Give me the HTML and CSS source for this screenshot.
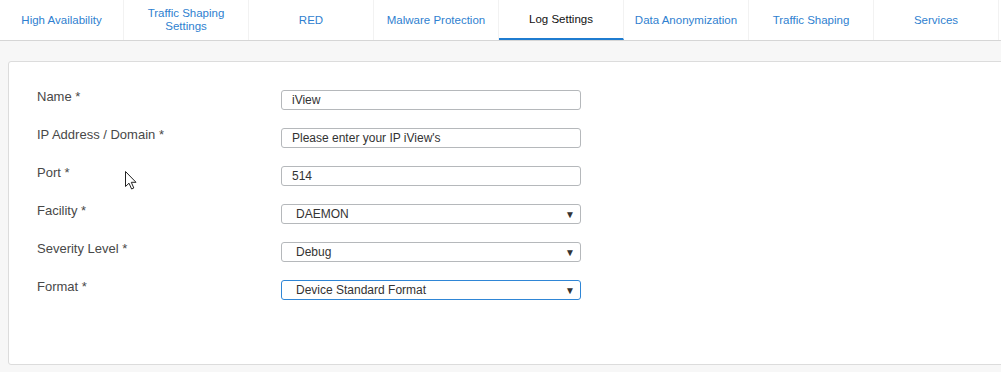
FILE: index.html
```html
<!DOCTYPE html>
<html lang="en">
<head>
  <meta charset="UTF-8">
  <title>Log Settings</title>
  <link rel="stylesheet" href="styles.css">
</head>
<body>
  <div class="tabs">
    <a class="tab first" href="#">High Availability</a>
    <a class="tab" href="#">Traffic Shaping<br>Settings</a>
    <a class="tab" href="#">RED</a>
    <a class="tab" href="#">Malware Protection</a>
    <a class="tab active" href="#">Log Settings</a>
    <a class="tab" href="#">Data Anonymization</a>
    <a class="tab" href="#">Traffic Shaping</a>
    <a class="tab" href="#">Services</a>
  </div>

  <div class="panel">
    <div class="form">
      <label class="label">Name *</label>
      <input class="field" type="text" value="iView">

      <label class="label">IP Address / Domain *</label>
      <input class="field" type="text" value="Please enter your IP iView's">

      <label class="label">Port *</label>
      <input class="field" type="text" value="514">

      <label class="label">Facility *</label>
      <div class="field select"><span>DAEMON</span><span class="arrow">&#9660;</span></div>

      <label class="label">Severity Level *</label>
      <div class="field select"><span>Debug</span><span class="arrow">&#9660;</span></div>

      <label class="label">Format *</label>
      <div class="field select focus"><span>Device Standard Format</span><span class="arrow">&#9660;</span></div>
    </div>
  </div>

  <!-- mouse pointer -->
  <svg class="cursor" width="12" height="19" viewBox="0 0 12 19">
    <path d="M0.5 0.5 L0.5 15.5 L4 12.2 L6.6 18 L8.8 17 L6.3 11.3 L11 11.3 Z" fill="#fff" stroke="#222" stroke-width="1"/>
  </svg>
</body>
</html>
```

FILE: styles.css
```css
body {
  margin: 0;
  background-color: #f7f7f7;
  font-family: "Liberation Sans", Arial, sans-serif;
  overflow: hidden;
  position: relative;
  height: 372px;
}

.tabs {
  display: flex;
  height: 40px;
  background-color: #fff;
  border-bottom: 1px solid #d6d6d6;
}

.tab {
  width: 125px;
  flex: none;
  display: flex;
  align-items: center;
  justify-content: center;
  text-align: center;
  font-size: 11.5px;
  line-height: 13px;
  color: #2f7fd0;
  text-decoration: none;
  border-right: 1px solid #f2f2f2;
  box-sizing: border-box;
}

.tab.first {
  width: 124px;
}

.tab.active {
  color: #111;
  border-bottom: 2px solid #1f7cd0;
  padding-top: 1px;
}

.panel {
  margin: 20px 0 0 8px;
  width: 1100px;
  height: 304px;
  background-color: #fff;
  border: 1px solid #dcdcdc;
  border-radius: 3px;
  box-sizing: border-box;
  padding: 28px 0 0 28px;
}

.form {
  display: grid;
  grid-template-columns: 244px 300px;
  row-gap: 18px;
}

.label {
  font-size: 13px;
  line-height: 14px;
  color: #484848;
}

.field {
  height: 20px;
  box-sizing: border-box;
  border: 1px solid #b5b8bb;
  border-radius: 3px;
  padding: 0 10px;
  font-family: "Liberation Sans", Arial, sans-serif;
  font-size: 12px;
  color: #333;
  background-color: #fff;
  outline: none;
}

.select {
  display: flex;
  align-items: center;
  justify-content: space-between;
  padding: 0 5px 0 14px;
}

.select .arrow {
  font-size: 10px;
  color: #333;
}

.select.focus {
  border-color: #2f86d6;
}

.cursor {
  position: absolute;
  left: 125px;
  top: 171px;
}
```
